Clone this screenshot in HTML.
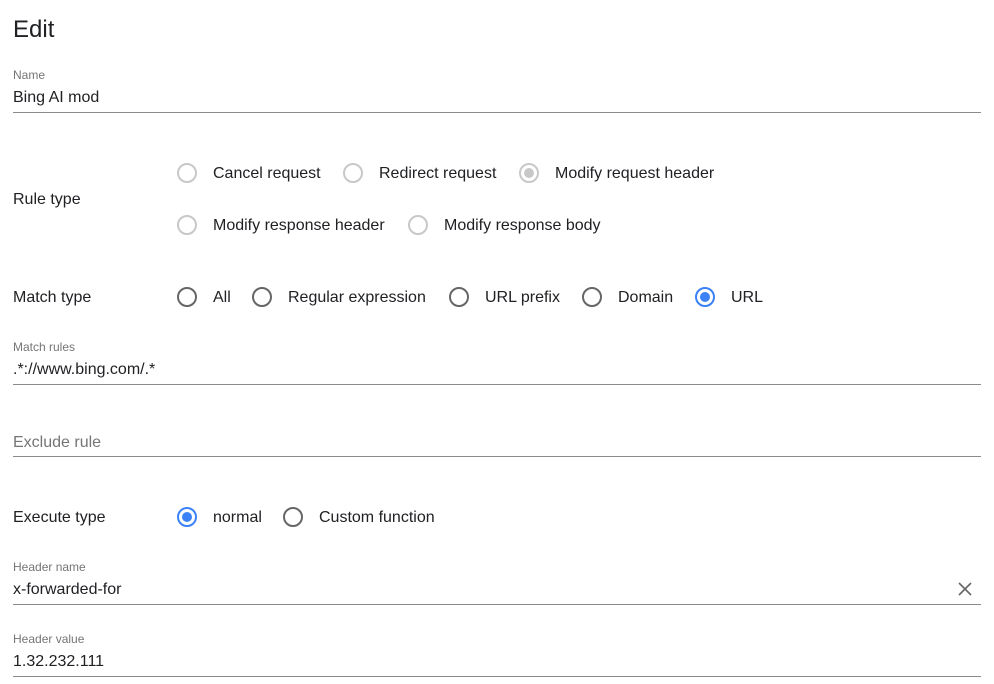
<!DOCTYPE html>
<html><head><meta charset="utf-8"><style>
body{margin:0;width:994px;height:684px;background:#fff;font-family:"Liberation Sans",Arial,sans-serif;color:#202124;position:relative;overflow:hidden}
.a{position:absolute;white-space:nowrap;line-height:1}
.t{font-size:16px}
.s{font-size:12px;color:#757575}
.line{position:absolute;left:13px;width:968px;height:1px;background:#8a8a8a}
.r{position:absolute;width:16px;height:16px;border:2px solid #666;border-radius:50%;box-sizing:content-box}
.r.d{border-color:#c8c8c8}
.r.on{border-color:#3b82f6}
.r.on::after{content:"";position:absolute;left:3px;top:3px;width:10px;height:10px;border-radius:50%;background:#3b82f6}
.r.dd::after{content:"";position:absolute;left:3px;top:3px;width:10px;height:10px;border-radius:50%;background:#c8c8c8}
</style></head><body>
<div class="a" style="left:13px;top:18px;font-size:24px">Edit</div>

<div class="a s" style="left:13px;top:69px">Name</div>
<div class="a t" style="left:13px;top:90px">Bing AI mod</div>
<div class="line" style="top:112px"></div>

<div class="a t" style="left:13px;top:192px">Rule type</div>
<div class="r d" style="left:177px;top:163px"></div><div class="a t" style="left:213px;top:166px">Cancel request</div>
<div class="r d" style="left:343px;top:163px"></div><div class="a t" style="left:379px;top:166px">Redirect request</div>
<div class="r d dd" style="left:519px;top:163px"></div><div class="a t" style="left:555px;top:166px">Modify request header</div>
<div class="r d" style="left:177px;top:215px"></div><div class="a t" style="left:213px;top:218px">Modify response header</div>
<div class="r d" style="left:408px;top:215px"></div><div class="a t" style="left:444px;top:218px">Modify response body</div>

<div class="a t" style="left:13px;top:290px">Match type</div>
<div class="r" style="left:177px;top:287px"></div><div class="a t" style="left:213px;top:290px">All</div>
<div class="r" style="left:252px;top:287px"></div><div class="a t" style="left:288px;top:290px">Regular expression</div>
<div class="r" style="left:449px;top:287px"></div><div class="a t" style="left:485px;top:290px">URL prefix</div>
<div class="r" style="left:582px;top:287px"></div><div class="a t" style="left:618px;top:290px">Domain</div>
<div class="r on" style="left:695px;top:287px"></div><div class="a t" style="left:731px;top:290px">URL</div>

<div class="a s" style="left:13px;top:341px">Match rules</div>
<div class="a t" style="left:13px;top:362px">.*://www.bing.com/.*</div>
<div class="line" style="top:384px"></div>

<div class="a t" style="left:13px;top:435px;color:#757575">Exclude rule</div>
<div class="line" style="top:456px"></div>

<div class="a t" style="left:13px;top:510px">Execute type</div>
<div class="r on" style="left:177px;top:507px"></div><div class="a t" style="left:213px;top:510px">normal</div>
<div class="r" style="left:283px;top:507px"></div><div class="a t" style="left:319px;top:510px">Custom function</div>

<div class="a s" style="left:13px;top:561px">Header name</div>
<div class="a t" style="left:13px;top:582px">x-forwarded-for</div>
<svg style="position:absolute;left:957px;top:581px" width="16" height="16" viewBox="0 0 16 16"><path d="M2 2L14 14M14 2L2 14" stroke="#666" stroke-width="1.6"/></svg>
<div class="line" style="top:604px"></div>

<div class="a s" style="left:13px;top:633px">Header value</div>
<div class="a t" style="left:13px;top:654px">1.32.232.111</div>
<div class="line" style="top:676px"></div>
</body></html>
